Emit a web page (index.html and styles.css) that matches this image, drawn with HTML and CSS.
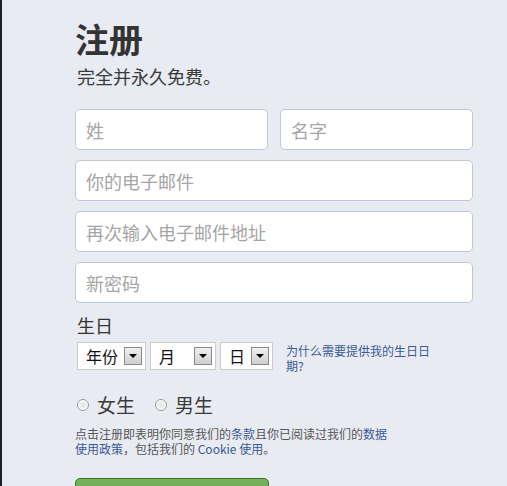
FILE: index.html
```html
<!DOCTYPE html>
<html lang="zh-CN">
<head>
    <meta charset="UTF-8">
    <title>注册</title>
    <link rel="stylesheet" href="styles.css">
</head>
<body>
    <div class="page">
        <div class="signup">
            <h1>注册</h1>
            <p class="subtitle">完全并永久免费。</p>

            <div class="name-row">
                <input class="field" type="text" placeholder="姓">
                <input class="field" type="text" placeholder="名字">
            </div>
            <input class="field" type="text" placeholder="你的电子邮件">
            <input class="field" type="text" placeholder="再次输入电子邮件地址">
            <input class="field" type="password" placeholder="新密码">

            <div class="label">生日</div>
            <div class="birthday">
                <div class="select year"><span>年份</span><i class="arrow"></i></div>
                <div class="select month"><span>月</span><i class="arrow"></i></div>
                <div class="select day"><span>日</span><i class="arrow"></i></div>
                <a class="why" href="#">为什么需要提供我的生日日期?</a>
            </div>

            <div class="gender">
                <label><span class="radio"></span>女生</label>
                <label><span class="radio"></span>男生</label>
            </div>

            <p class="terms">点击注册即表明你同意我们的<a href="#">条款</a>且你已阅读过我们的<a href="#">数据使用政策</a>，包括我们的 <a href="#">Cookie 使用</a>。</p>

            <button class="submit">注册</button>
        </div>
    </div>
</body>
</html>
```

FILE: styles.css
```css
body {
    margin: 0;
    background-color: #e9ebf2;
    font-family: 'Noto Sans CJK SC', 'Noto Sans', sans-serif;
    color: #333;
    overflow: hidden;
}

.page {
    border-left: 2px solid #1e1e1e;
    height: 486px;
    box-sizing: border-box;
    padding: 19px 0 0 73px;
    overflow: hidden;
}

.signup {
    width: 400px;
}

h1 {
    margin: 0;
    font-size: 34px;
    line-height: 40px;
    font-weight: 700;
    color: #333;
}

.subtitle {
    margin: 6px 0 22px 2px;
    font-size: 18px;
    line-height: 22px;
    color: #3a3a3a;
}

.name-row {
    display: flex;
    gap: 12px;
}

.field {
    display: block;
    width: 398px;
    height: 41px;
    box-sizing: border-box;
    margin: 0 0 10px 0;
    padding: 0 10px;
    border: 1px solid #bdc7d8;
    border-radius: 5px;
    background-color: #fff;
    font-family: inherit;
    font-size: 18px;
    color: #333;
    outline: none;
}

.name-row .field {
    width: 193px;
}

.field::placeholder {
    color: #a5a5a5;
}

.label {
    margin: 11px 0 6px 2px;
    font-size: 18px;
    line-height: 22px;
}

.birthday {
    display: flex;
    align-items: flex-start;
    gap: 4px;
    margin-left: 2px;
}

.select {
    display: flex;
    align-items: center;
    justify-content: space-between;
    height: 28px;
    box-sizing: border-box;
    padding: 0 3px 0 8px;
    border: 1px solid #ccc;
    background-color: #fff;
    font-size: 16px;
    color: #111;
}

.year { width: 69px; }
.month { width: 66px; }
.day { width: 53px; }

.arrow {
    position: relative;
    width: 18px;
    height: 18px;
    box-sizing: border-box;
    border: 1px solid #888;
    background: linear-gradient(#f0f0f0, #cfcfcf);
}

.arrow::after {
    content: '';
    position: absolute;
    left: 4px;
    top: 6px;
    border-left: 4px solid transparent;
    border-right: 4px solid transparent;
    border-top: 4px solid #000;
}

.why {
    width: 146px;
    margin: 1px 0 0 9px;
    font-size: 12px;
    line-height: 15px;
    color: #3b5998;
    text-decoration: none;
}

.gender {
    display: flex;
    gap: 20px;
    margin: 20px 0 0 2px;
    font-size: 19px;
    line-height: 24px;
    color: #3a3a3a;
}

.gender label {
    display: flex;
    align-items: center;
    gap: 8px;
}

.radio {
    width: 10px;
    height: 10px;
    border: 1px solid #999;
    border-radius: 50%;
    background: radial-gradient(circle, #e8e8e8 30%, #fff 70%);
}

.terms {
    width: 320px;
    margin: 9px 0 0 0;
    font-size: 12px;
    line-height: 15px;
    color: #555;
}

.terms a {
    color: #3b5998;
    text-decoration: none;
}

.submit {
    display: block;
    width: 194px;
    height: 36px;
    margin-top: 22px;
    border: 1px solid #3b6e22;
    border-radius: 5px;
    background: linear-gradient(#75b25a, #629e46);
    color: #fff;
    font-family: inherit;
    font-size: 18px;
    font-weight: 700;
}
```
